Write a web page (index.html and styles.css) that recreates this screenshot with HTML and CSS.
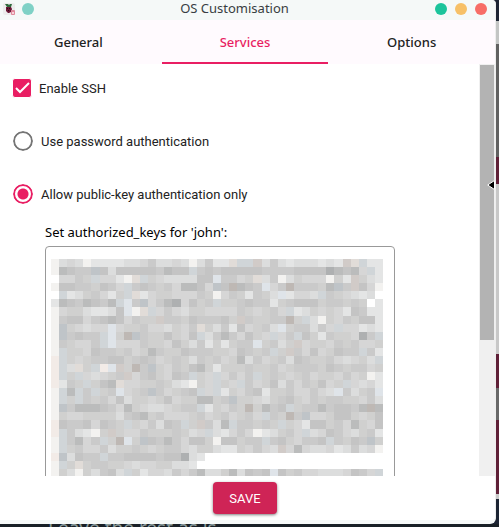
FILE: index.html
```
<!DOCTYPE html>
<html lang="en">
<head>
    <meta charset="UTF-8">
    <meta name="viewport" content="width=device-width, initial-scale=1.0">
    <title>OS Customisation</title>
    <link rel="stylesheet" href="styles.css">
</head>
<body>
    <div class="window">
        <!-- Title bar -->
        <header class="titlebar">
            <svg class="app-icon" viewBox="0 0 12 12" aria-hidden="true">
                <rect width="12" height="12" rx="2" fill="#ececec"/>
                <path d="M2 1l3 0 1 1 1-1h2l-1 3H4z" fill="#2f6b3c"/>
                <path d="M3 4h5l1 2-1 3-2 1H5L3 8z" fill="#6b1837"/>
                <path d="M4 5h1v1H4zM6 5h1v1H6zM5 7h1v1H5z" fill="#2a0b18"/>
                <rect x="8" y="7" width="4" height="5" rx="1" fill="#e08a9c"/>
                <path d="M9 9h2v2H9z" fill="#f6d3da"/>
            </svg>
            <span class="dot dot-pin"></span>
            <h1 class="title">OS Customisation</h1>
            <div class="window-buttons">
                <button class="dot dot-minimise" type="button" aria-label="Minimise"></button>
                <button class="dot dot-maximise" type="button" aria-label="Maximise"></button>
                <button class="dot dot-close" type="button" aria-label="Close"></button>
            </div>
        </header>

        <!-- Tabs -->
        <nav class="tabs">
            <button class="tab" type="button">General</button>
            <button class="tab active" type="button">Services</button>
            <button class="tab" type="button">Options</button>
        </nav>

        <!-- Services tab -->
        <div class="scroll-area">
            <form class="options" id="servicesForm">
                <div class="option">
                    <input class="check" type="checkbox" id="enableSsh" checked>
                    <label for="enableSsh">Enable SSH</label>
                </div>
                <div class="option">
                    <input class="radio" type="radio" id="passwordAuth" name="auth">
                    <label for="passwordAuth">Use password authentication</label>
                </div>
                <div class="option">
                    <input class="radio" type="radio" id="keyAuth" name="auth" checked>
                    <label for="keyAuth">Allow public-key authentication only</label>
                </div>
                <div class="keys">
                    <label class="keys-label" for="keys">Set authorized_keys for 'john':</label>
                    <div class="keys-box">
                        <textarea class="keys-input" id="keys"></textarea>
                        <canvas class="keys-mask" id="keysMask" width="41" height="27"></canvas>
                    </div>
                </div>
            </form>
            <div class="scrollbar">
                <div class="scroll-thumb"></div>
                <svg class="pointer" viewBox="0 0 8 10" aria-hidden="true">
                    <path d="M7.500 .5v9L.7 5z" fill="#000" stroke="#fff" stroke-width="1"/>
                </svg>
            </div>
        </div>

        <footer class="actions">
            <button class="save" type="submit" form="servicesForm">SAVE</button>
        </footer>
    </div>
    <div class="behind">Leave the rest as is</div>

    <script src="mask.js"></script>
</body>
</html>
```
FILE: styles.css
```
* {
    box-sizing: border-box;
}
body {
    margin: 0;
    height: 100vh;
    display: flex;
    flex-direction: column;
    overflow: hidden;
    font-family: "Noto Sans", sans-serif;
    font-size: 13px;
    color: #222;
    /* other windows showing past the right edge */
    background: linear-gradient(#1c2433 0 21px, #c3c5c4 21px 44px, #616161 44px 157px, #5f2037 157px 184px, #c8c8c8 184px 354px, #5f2037 354px 388px, #686868 388px 420px, #5f2037 420px 494px, #c8c8c8 494px 499px, #1c2433 499px);
}
button {
    border: none;
    padding: 0;
    font: inherit;
    cursor: pointer;
}
.window {
    flex: 1;
    min-height: 0;
    margin-right: 3px;
    display: flex;
    flex-direction: column;
    overflow: hidden;
    background-color: #fff;
    border-right: 1px solid #eee;
    border-bottom: 4px solid #f5f9f8;
    border-radius: 0 4px 6px 0;
}
.titlebar {
    flex: none;
    height: 20px;
    display: flex;
    align-items: center;
    padding: 0 8px 2px 3px;
    background-color: #f5f9f8;
}
.app-icon {
    width: 12px;
    height: 12px;
    margin-right: 7px;
}
.dot {
    width: 12px;
    height: 12px;
    border-radius: 50%;
}
.dot-pin {
    background-color: #7fd1c6;
}
.dot-minimise {
    background-color: #1bc49b;
}
.dot-maximise {
    background-color: #f7c067;
}
.dot-close {
    background-color: #f76d66;
}
.title {
    flex: 1;
    margin: 0;
    font-size: 13px;
    font-weight: 400;
    line-height: 16px;
    padding-bottom: 2px;
    text-align: center;
    color: #383e42;
}
.window-buttons {
    display: flex;
    gap: 8px;
}
.tabs {
    flex: none;
    display: grid;
    grid-template-columns: repeat(3, 1fr);
    height: 44px;
    margin-left: -5px;
    background-color: #fffafe;
}
.tab {
    background: none;
    border-top: 2px solid transparent;
    border-bottom: 2px solid transparent;
    font-weight: 500;
    color: #222;
}
.tab.active {
    color: #e91e63;
    border-bottom-color: #e91e63;
}
.scroll-area {
    flex: 1;
    min-height: 0;
    display: flex;
    overflow: hidden;
}
.options {
    flex: 1;
    padding: 14px 12px 0;
    font-family: Roboto, sans-serif;
}
.option {
    display: flex;
    align-items: center;
    gap: 7px;
    height: 20px;
    margin-bottom: 33px;
}
.option:nth-child(3) {
    margin-bottom: 18px;
}
.check,
.radio {
    appearance: none;
    flex: none;
    margin: 0;
    background-color: #fff;
}
.check {
    width: 20px;
    height: 20px;
    border: 1px solid #fff;
    border-radius: 3px;
}
.check:checked {
    background: #e91e63 url("data:image/svg+xml,%3Csvg xmlns='http://www.w3.org/2000/svg' viewBox='0 0 18 18'%3E%3Cpath d='M3 9l4 4 9-9' fill='none' stroke='white' stroke-width='2'/%3E%3C/svg%3E") center / 18px 18px;
}
.radio {
    width: 22px;
    height: 22px;
    border: 1px solid #fff;
    border-radius: 50%;
    box-shadow: inset 0 0 0 2px #757575;
}
.radio:checked {
    box-shadow: inset 0 0 0 2px #e91e63;
    background: radial-gradient(circle, #e91e63 5px, #fff 6px);
}
.keys {
    padding-left: 33px;
}
.keys-label {
    display: block;
    margin-bottom: 4px;
    font-family: "Noto Sans", sans-serif;
    line-height: 20px;
    color: #000;
}
.keys-box {
    position: relative;
    max-width: 350px;
}
.keys-input {
    display: block;
    width: 100%;
    height: 260px;
    padding: 12px 6px;
    border: 1px solid #999;
    border-radius: 4px;
    outline: none;
    resize: none;
}
/* covers the key text */
.keys-mask {
    position: absolute;
    top: 13px;
    left: 6px;
    width: calc(100% - 18px);
    height: 218px;
    image-rendering: pixelated;
    pointer-events: none;
}
.scrollbar {
    position: relative;
    width: 16px;
    padding: 1px 1px 0;
    background-color: #f0f0f0;
}
.scroll-thumb {
    height: 67%;
    background-color: #b3b3b3;
}
.pointer {
    position: absolute;
    top: 116px;
    right: 0;
    width: 8px;
    height: 10px;
}
.actions {
    flex: none;
    display: flex;
    justify-content: center;
    padding: 6px 5px 6px 0;
}
.save {
    width: 64px;
    height: 32px;
    border-radius: 4px;
    background-color: #cf2456;
    box-shadow: 0 1px 3px rgba(0, 0, 0, 0.5);
    font-family: Roboto, sans-serif;
    font-size: 13px;
    color: #fff;
}
.behind {
    flex: none;
    height: 3px;
    overflow: hidden;
    padding-left: 48px;
    background-color: #182026;
    font-size: 19px;
    line-height: 8px;
    color: #899;
}
```
FILE: mask.js
```
// one letter per block: 0 is white, 9 the darkest, letters are tints
const shades = {
    0: '#ffffff', 1: '#f3f2f0', 2: '#e4e5e5', 3: '#dcdddd', 4: '#d6d6d6',
    5: '#d0d0cf', 6: '#cacaca', 7: '#c4c4c4', 8: '#bbbcbc', 9: '#aeb0b1',
    p: '#f2ebe7', w: '#e1dcd8', u: '#d1cbc8', k: '#beb8b4',
    b: '#d0d5d8', l: '#dfe4e9', c: '#bfc4c8'
};

const rows = [
    '1343122223346334313622wbbu3632333232uwb2',
    '18766c73777776877b676777776666777798784b2',
    '04465b4421wb54333377l6645w36135444152u532',
    '177665764b6765648874c7k876l46k66658c6u741',
    '0b2356425bw24554446514652653l2443b6543230',
    '28768768bl6c46894756b5567662567775665650',
    '145532237l1wb4643554444654564b2354542762',
    '1677467874655u665766675u65566k5b315465772',
    '1c54344l4556443546w536274563l566364b44232',
    '1c6766bl5kc6557547b36864754b46b752655496b',
    '165446bl44465547536252566l5635u4554656445',
    '1b5547665645865576665547656b5u64745766b62',
    'pb54566775676456536564583645637655643453b',
    'pb3w5bplu5k6c5465785255565564566657656645',
    'pb5b43456u4675476b54b4646b56545645546451',
    'p265b578w44556532154b54b645736465745b4342',
    '1b8b6b56l456c64567b4b25467255644643l6356l',
    '1b5b656473554574558856c554356754656655463',
    '1c6888764854334566b25465k5867b566867768k8',
    '15445555367856444564564564b65k6c445775457',
    'p76674765b546376b5u638b66565b542775648547',
    'pb63215u54465556534b32464123564b347643562',
    '1b6846b5kl5c76864775177566b6754667b6576c5',
    '1b56446355654566435532254643u484334236341',
    'pc3766b667777677932000000000000000000000',
    '1b5w56655434455332000000000000000000000',
    '153153673b52443646833583767l756443334764b'
];

const ctx = document.getElementById('keysMask').getContext('2d');
rows.forEach((row, y) => {
    // pad the rows that end early
    const pad = y === 24 || y === 25 ? '0' : '2';
    [...row.padEnd(41, pad)].slice(0, 41).forEach((shade, x) => {
        ctx.fillStyle = shades[shade];
        ctx.fillRect(x, y, 1, 1);
    });
});
```
